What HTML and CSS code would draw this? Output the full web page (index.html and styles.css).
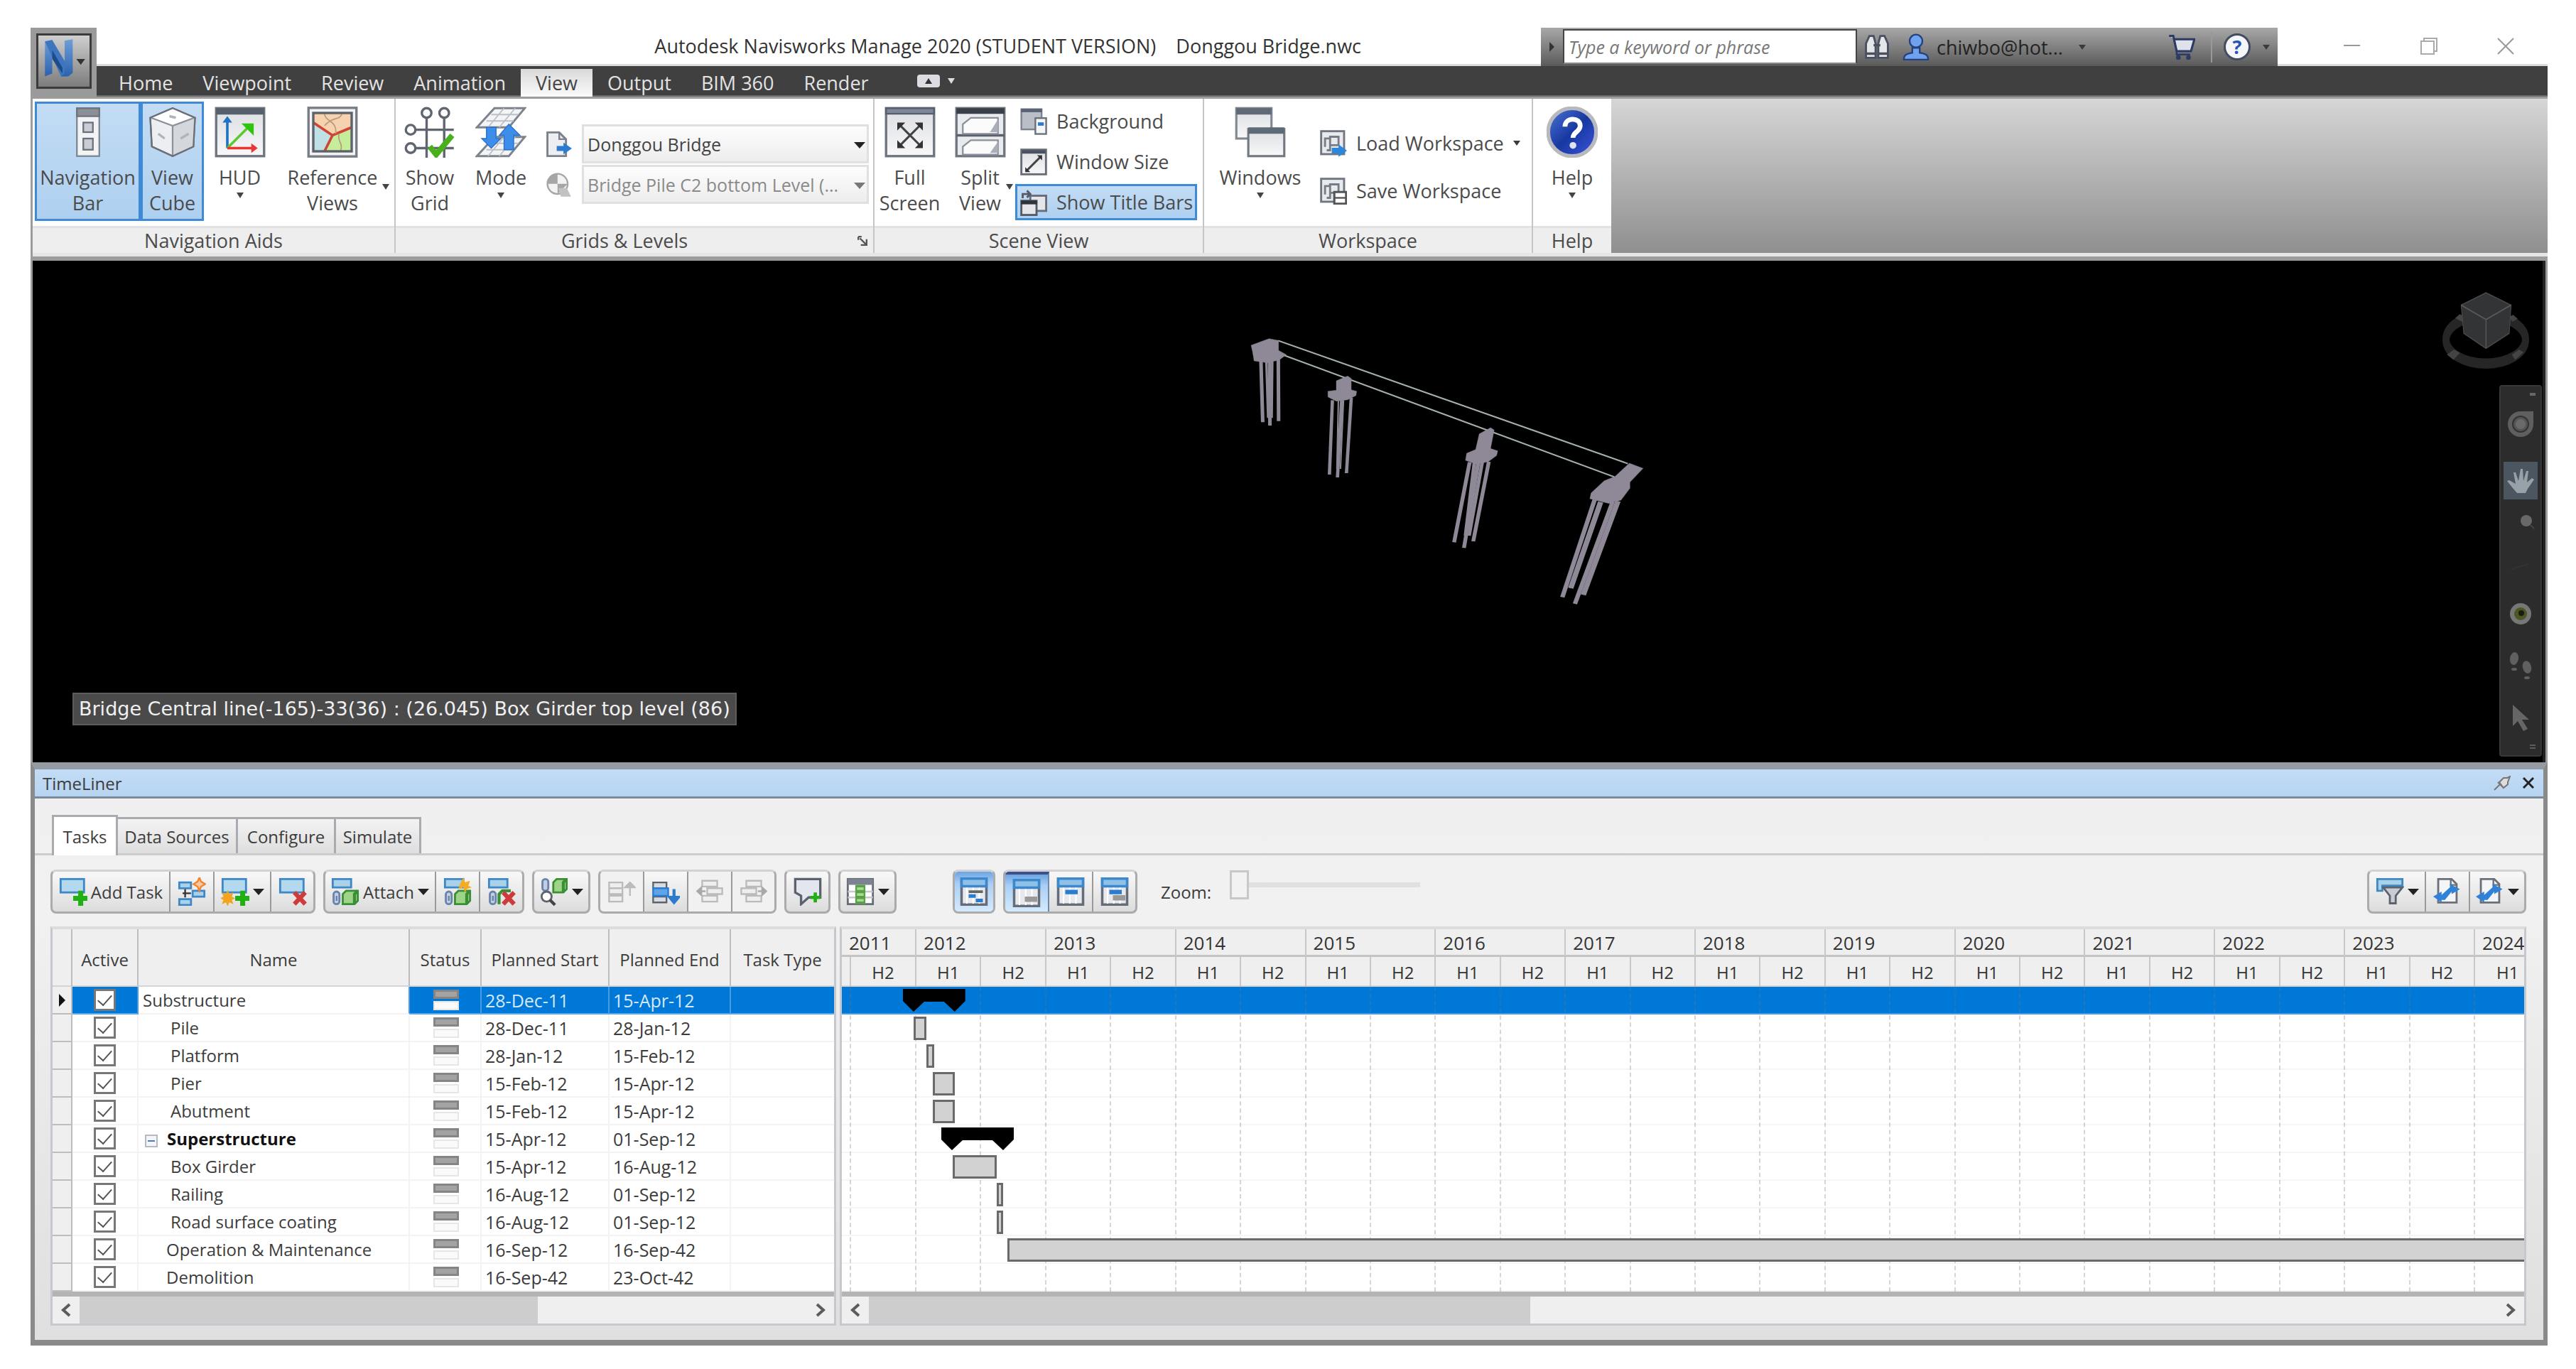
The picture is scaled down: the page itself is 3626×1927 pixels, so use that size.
FILE: index.html
```html
<!DOCTYPE html>
<html lang="en">
<head>
<meta charset="utf-8">
<title>Autodesk Navisworks Manage 2020</title>
<link rel="stylesheet" href="styles.css">
</head>
<body>
<svg class="defs" aria-hidden="true">
  <defs>
    <linearGradient id="g-metal" x1="0" y1="0" x2="0" y2="1"><stop offset="0" stop-color="#dcdee2"/><stop offset="1" stop-color="#f8f8f9"/></linearGradient>
    <linearGradient id="g-n" x1="0" y1="0" x2="0" y2="1"><stop offset="0" stop-color="#6f9fd8"/><stop offset="1" stop-color="#2a62ad"/></linearGradient>
    <linearGradient id="g-help" x1="0" y1="0" x2="1" y2="1"><stop offset="0" stop-color="#4f78d8"/><stop offset=".5" stop-color="#1738a0"/><stop offset="1" stop-color="#3f55e0"/></linearGradient>
    <g id="i-task"><rect x="1" y="1" width="14" height="8" fill="#b4d8ee" stroke="#3f88c5" stroke-width="1.200"/></g>
    <g id="i-plus"><path d="M11.500 8h3v3h3v3h-3v3h-3v-3h-3v-3h3z" fill="#1fb012"/></g>
    <g id="i-spark"><path d="M4 7.500l1 2.500 2.500-1-1 2.500 2 1-2 1 1 2.500-2.500-1L4 17.500 3 15l-2.500 1 1-2.500-2-1 2-1-1-2.500 2.500 1z" fill="#f2a51f"/></g>
    <g id="i-x"><path d="M9.500 9l6.500 7M16 9l-6.500 7" stroke="#cf3a3a" stroke-width="2.600" fill="none"/></g>
    <g id="i-clip"><rect x="1.500" y="8.500" width="3.500" height="7.500" rx="1.700" fill="#c3cfe0" stroke="#6983ac" stroke-width="1.200"/><path d="M3.300 11v3" stroke="#6983ac"/></g>
    <g id="i-cube"><path d="M7 10l2-2h7v6l-2 2H7z" fill="#9fd488" stroke="#3a8f35" stroke-width="1.200"/><path d="M14 16v-6l2-2" stroke="#3a8f35" stroke-width="1.800" fill="none"/></g>
    <g id="i-win"><rect x=".7" y=".7" width="14.600" height="14.600" fill="url(#g-metal)" stroke="#666d78" stroke-width="1.200"/><path d="M1 2h14" stroke="#4b525f" stroke-width="2"/></g>
    <g id="i-gantt"><rect x="1" y=".7" width="14" height="14.600" fill="#e8e9ec" stroke="#666d78" stroke-width="1.400"/><path d="M1 .7h14v4.300H1z" fill="#8fc0e6" stroke="#3b88cf" stroke-width="1.400"/><path d="M4 5.800v9M7.500 5.800v9M11 5.800v9" stroke="#fff" stroke-width=".8"/></g>
    <g id="i-sync"><path d="M3 1h8l3 3v11H3z" fill="#f4f5f7" stroke="#6a7079" stroke-width="1.200"/><path d="M10.500 1v3.500H14" fill="none" stroke="#6a7079"/><path d="M0 11.500l5-3v2l5-4.500V4l6 3-5 3V8.500l-4 5H5V15z" fill="#2f82d8"/></g>
    <symbol id="chev-l" viewBox="0 0 16 20"><path d="M13 2L4 10l9 8" fill="none" stroke="#5c5c5c" stroke-width="4"/></symbol>
    <symbol id="chev-r" viewBox="0 0 16 20"><path d="M3 2l9 8-9 8" fill="none" stroke="#5c5c5c" stroke-width="4"/></symbol>
  </defs>
</svg>

<div class="window">
  <header class="top">
    <button class="app-button" aria-label="Application menu">
      <svg viewBox="0 0 70 70" width="70" height="70"><path d="M9 8l10-2v46l-10 4z" fill="url(#g-n)"/><path d="M9 8l10-2 20 34v16H31z" fill="#3d76bd"/><path d="M36 7l11-2v46l-6 5H31l5-5z" fill="url(#g-n)"/><path d="M19 20l14 24v8L19 32z" fill="#1c4c8c"/><path d="M52 32h12l-6 8z" fill="#333"/></svg>
    </button>
    <div class="top-rows">
      <div class="titlebar">
        <h1 class="title"><span>Autodesk Navisworks Manage 2020 (STUDENT VERSION)</span><span>Donggou Bridge.nwc</span></h1>
        <div class="infocenter">
          <button class="info-toggle" aria-label="Toggle search"><i class="caret caret-right"></i></button>
          <input class="search" type="text" aria-label="Search" placeholder="Type a keyword or phrase">
          <div class="info-tools">
            <button aria-label="Search"><svg viewBox="0 0 16 16" width="38" height="38"><path d="M1.500 14.500V6l2-4.500h2.500l1.200 4.500v8.500zM8.800 14.500V6L10 1.500h2.500l2 4.500v8.500z" fill="#e4e6ea" stroke="#4a5060" stroke-width="1.200"/><path d="M6 7h4M2 12h5M9 12h5" stroke="#4a5060" stroke-width="1.400"/></svg></button>
            <button class="user"><svg viewBox="0 0 16 16" width="38" height="42"><circle cx="8" cy="4.500" r="3.800" fill="#6ea2ee" stroke="#24417e"/><path d="M.8 15.500c0-3 2-3.500 5-4v-3h4.400v3c3 .5 5 1 5 4z" fill="#6ea2ee" stroke="#24417e"/></svg><span>chiwbo@hot...</span><i class="caret small"></i></button>
            <button class="cart" aria-label="App store"><svg viewBox="0 0 16 16" width="38" height="38"><path d="M.5 1.500h2.500l2 9h8.500l2-7H4" fill="#dfe2ea" stroke="#2c3a66" stroke-width="1.300"/><path d="M5 10.500v2h8" stroke="#2c3a66" fill="none"/><circle cx="6" cy="14.300" r="1.400" fill="#2c3a66"/><circle cx="12" cy="14.300" r="1.400" fill="#2c3a66"/></svg></button>
            <button class="info-help" aria-label="Help"><span class="help-dot">?</span><i class="caret small"></i></button>
          </div>
        </div>
        <div class="window-controls">
          <button aria-label="Minimize"><svg viewBox="0 0 26 26" width="26" height="26"><path d="M1 12h23" stroke="#999" stroke-width="2"/></svg></button>
          <button aria-label="Restore"><svg viewBox="0 0 26 26" width="26" height="26"><path d="M2 6h18v18H2zM6 5V2h18v18h-3" fill="none" stroke="#aaa" stroke-width="2"/></svg></button>
          <button aria-label="Close"><svg viewBox="0 0 26 26" width="26" height="26"><path d="M2 2l22 22M24 2L2 24" stroke="#999" stroke-width="2"/></svg></button>
        </div>
      </div>
      <nav class="menu">
        <a href="#">Home</a><a href="#">Viewpoint</a><a href="#">Review</a><a href="#">Animation</a><a href="#" class="active">View</a><a href="#">Output</a><a href="#">BIM 360</a><a href="#">Render</a>
        <button class="ribbon-toggle" aria-label="Minimize ribbon"><span class="pill"><i class="caret caret-up"></i></span><i class="caret light"></i></button>
      </nav>
    </div>
  </header>

  <section class="ribbon" aria-label="View ribbon">
    <div class="panel p-nav">
      <div class="panel-body">
        <button class="big on"><svg viewBox="0 0 32 32"><rect x="9" y="1" width="14" height="30" fill="#f2f3f5" stroke="#7c8590"/><path d="M9 1h14v5H9z" fill="#8b8f98" stroke="#6e747e"/><rect x="13" y="10" width="6" height="6" fill="#c9ccd3" stroke="#6a7079"/><rect x="13" y="20" width="6" height="7" fill="#c9ccd3" stroke="#6a7079"/></svg><span>Navigation<br>Bar</span></button>
        <button class="big on"><svg viewBox="0 0 32 32"><path d="M16 1l14 6-1 18-13 6L3 25 2 7z" fill="#eceef1" stroke="#6a6f78"/><path d="M2 7l14 5 14-5L16 1z" fill="#fff"/><path d="M16 12v19l13-6 1-18z" fill="#d4d7dc"/><path d="M2.500 7L16 12l13.500-5M16 12v19" fill="none" stroke="#8c919a"/><path d="M16 1l14 6-1 18-13 6L3 25 2 7z" fill="none" stroke="#6a6f78"/><path d="M7 17l4 3M21 20l5-3M14 6l4 1" stroke="#b0b3ba" stroke-width="1.500"/></svg><span>View<br>Cube</span></button>
        <button class="big"><svg viewBox="0 0 32 32"><rect x="1" y="1" width="30" height="30" fill="url(#g-metal)" stroke="#6f7680" stroke-width="1.500"/><path d="M1 1h30v4H1z" fill="#55606e"/><path d="M8 26V9" stroke="#1f72c4" stroke-width="1.600"/><path d="M5 10l3-4 3 4z" fill="#1f72c4"/><path d="M8 26l13-13" stroke="#5cc82c" stroke-width="1.600"/><path d="M18 11h6v6z" fill="#2fc40d" stroke="#2fc40d"/><path d="M8 26h16" stroke="#e33" stroke-width="1.600"/><path d="M23 23l4 3-4 3z" fill="#e33"/></svg><span>HUD</span><i class="caret"></i></button>
        <button class="big"><svg viewBox="0 0 32 32"><rect x="1" y=".8" width="30" height="30.400" fill="#f2f2f4" stroke="#777d87" stroke-width="1.500"/><rect x="4" y="4" width="24" height="24" fill="#f6d2ae"/><path d="M4 10l12 8-4 10H4z" fill="#bfe0e4"/><path d="M16 18l12-4v14H11z" fill="#c6ee9a"/><path d="M4 10l12 8 12-5M16 18l-5 10" stroke="#cf4436" stroke-width="1.600" fill="none"/><path d="M11 4c0 6 8 4 7 13M22 4c-1 5-6 2-11 8M20 17c-1 5 3 6 1 11" stroke="#b99c80" fill="none" stroke-width=".8"/><rect x="4" y="4" width="24" height="24" fill="none" stroke="#5c626c" stroke-width="1.500"/></svg><span class="side"><span>Reference<br>Views</span><i class="caret"></i></span></button>
      </div>
      <h2>Navigation Aids</h2>
    </div>
    <div class="panel p-grids">
      <div class="panel-body">
        <button class="big"><svg viewBox="0 0 32 32"><g fill="none" stroke="#5f666f" stroke-width="1.500"><circle cx="14" cy="4" r="3"/><circle cx="25" cy="4" r="3"/><circle cx="4" cy="14.500" r="3"/><circle cx="4" cy="26" r="3"/><path d="M14 7v25M25 7v25M7 14.500h24M7 26h24"/></g><path d="M16 25l4 5 10-12" fill="none" stroke="#47b01a" stroke-width="3.500"/></svg><span>Show<br>Grid</span></button>
        <button class="big"><svg viewBox="0 0 32 32"><g fill="#f3f4f5" stroke="#7d838c" stroke-width="1.300"><path d="M1 13L12 1h19L21 13zM1 31l11-12h19L21 31z"/></g><path d="M7 9h17M10 5h17M7 27h17M10 23h17M8 13l10-12M15 13L25 1M8 31l10-12M15 31l10-12" stroke="#bcc0c6" stroke-width=".8"/><path d="M7 13h6v7h3l-6 6-6-6h3zM18 27h6V18h4l-7-7-6 7h3z" fill="#3c8eea" stroke="#2a70c8" stroke-width=".6"/></svg><span>Mode</span><i class="caret"></i></button>
        <div class="combos">
          <svg viewBox="0 0 16 16"><path d="M1.500 1h7l4 4v10h-11z" fill="#eceef1" stroke="#7b818a" stroke-width="1.200"/><path d="M8.500 1v4h4" fill="none" stroke="#7b818a"/><path d="M7 9h4V7l5 3.500-5 3.500v-2H7z" fill="#2b7bd0"/></svg>
          <label class="combo"><select aria-label="Active grid"><option>Donggou Bridge</option></select><i class="caret large"></i></label>
          <svg viewBox="0 0 16 16"><circle cx="7.500" cy="7.500" r="6" fill="#f3f3f3" stroke="#a6a6a6"/><path d="M7.500 1.500v6h-6a6 6 0 0 1 6-6zM7.500 13.500v-6h6z" fill="#a6a6a6"/><path d="M8 10h5l2.500 5h-6z" fill="#c2c2c2"/></svg>
          <label class="combo off"><select aria-label="Active level" disabled><option>Bridge Pile C2 bottom Level (...</option></select><i class="caret large"></i></label>
        </div>
      </div>
      <h2>Grids &amp; Levels<svg class="launcher" viewBox="0 0 12 12" width="14" height="14"><path d="M1 1h4M1 1v4M3 3l7 7M11 4v7H4" fill="none" stroke="#555" stroke-width="2"/></svg></h2>
    </div>
    <div class="panel p-scene">
      <div class="panel-body">
        <button class="big"><svg viewBox="0 0 32 32"><rect x="1" y="1" width="30" height="30" fill="url(#g-metal)" stroke="#6f7680" stroke-width="1.500"/><path d="M1 1h30v3.500H1z" fill="#7c8799" stroke="#555f6c"/><path d="M9 11l14 14M23 11L9 25" stroke="#444" stroke-width="1.400"/><path d="M8 10h5l-5 5zM24 10h-5l5 5zM8 26h5l-5-5zM24 26h-5l5-5z" fill="#333"/></svg><span>Full<br>Screen</span></button>
        <button class="big"><svg viewBox="0 0 32 32"><rect x="1" y="1" width="30" height="30" fill="#e8eaed" stroke="#6f7680" stroke-width="1.500"/><path d="M1 1h30v3.500H1z" fill="#3a3f47"/><path d="M1 18h30" stroke="#5b616b" stroke-width="1.500"/><path d="M5 17v-6l5-4h17v10zM5 30v-5l5-4h17v9z" fill="#fbfbfc" stroke="#8a9099"/><path d="M22 16l5-8v8zM22 29l5-7v7z" fill="#a9afb9"/></svg><span class="side"><span>Split<br>View</span><i class="caret"></i></span></button>
        <div class="stack">
          <button class="row"><svg viewBox="0 0 16 16"><rect x=".7" y=".7" width="12" height="12" fill="#b9bec7" stroke="#7b838f"/><path d="M.5 1.500h12.500" stroke="#596373" stroke-width="2"/><rect x="9" y="6" width="6.400" height="9.400" fill="#f5f6f8" stroke="#6a7079"/><path d="M10.500 9.500h3.500" stroke="#2b7bd0" stroke-width="2"/></svg>Background</button>
          <button class="row"><svg viewBox="0 0 16 16"><use href="#i-win"/><path d="M4 13l8-8" stroke="#444" stroke-width="1.200"/><path d="M3 11v3h3zM13 4v3l-3-3z" fill="#333"/></svg>Window Size</button>
          <button class="row on"><svg viewBox="0 0 16 16"><rect x="6" y="4" width="9.400" height="9" fill="#e4e6ea" stroke="#666d78" stroke-width="1.200"/><rect x=".7" y="7" width="9" height="8.400" fill="#e4e6ea" stroke="#555b66" stroke-width="1.200"/><path d="M.5 8h9.500" stroke="#2e333b" stroke-width="2.200"/><path d="M1.500 5.500V3h4M4 1l2 2-2 2" fill="none" stroke="#555b66" stroke-width="1.200"/></svg>Show Title Bars</button>
        </div>
      </div>
      <h2>Scene View</h2>
    </div>
    <div class="panel p-work">
      <div class="panel-body">
        <button class="big"><svg viewBox="0 0 32 32"><rect x="1" y="1" width="22" height="19" fill="url(#g-metal)" stroke="#828891" stroke-width="1.400"/><path d="M1 1h22v4H1z" fill="#5f6a78"/><rect x="8.500" y="14" width="22.500" height="17" fill="url(#g-metal)" stroke="#737982" stroke-width="1.400"/><path d="M8.500 13h22.500v4H8.500z" fill="#5f6a78"/></svg><span>Windows</span><i class="caret"></i></button>
        <div class="stack wide">
          <button class="row"><svg viewBox="0 0 16 16"><rect x=".7" y=".7" width="13.600" height="13.600" fill="#e8eaee" stroke="#6f7680" stroke-width="1.200"/><path d="M3 10V5h3v7H4M6 4h5v5H6z" fill="none" stroke="#777d87" stroke-width="1.200"/><path d="M7 10.500h4V8.500l5 3.700-5 3.700v-2H7z" fill="#2b86dc"/></svg>Load Workspace<i class="caret small"></i></button>
          <button class="row"><svg viewBox="0 0 16 16"><rect x=".7" y=".7" width="13.600" height="13.600" fill="#e8eaee" stroke="#6f7680" stroke-width="1.200"/><path d="M3 10V5h3v7H4M6 4h5v5H6z" fill="none" stroke="#777d87" stroke-width="1.200"/><path d="M8.500 8.500h7v7h-7z" fill="#fff" stroke="#555" stroke-width="1.300"/><path d="M8.500 12h7" stroke="#555"/></svg>Save Workspace</button>
        </div>
      </div>
      <h2>Workspace</h2>
    </div>
    <div class="panel p-help">
      <div class="panel-body">
        <button class="big"><svg viewBox="0 0 32 32"><circle cx="16" cy="16" r="15" fill="url(#g-help)" stroke="#b7b9be" stroke-width="2.400"/><path d="M11.500 12.500c0-6 9.500-6 9.500-.5 0 3.800-4.500 3.800-4.500 7.500" fill="none" stroke="#fff" stroke-width="3"/><circle cx="16.500" cy="24.300" r="2.100" fill="#dfe4f4"/></svg><span>Help</span><i class="caret"></i></button>
      </div>
      <h2>Help</h2>
    </div>
    <div class="ribbon-rest"></div>
  </section>

  <main class="viewport">
    <svg class="scene" viewBox="46 367 3537 706" preserveAspectRatio="none" aria-label="Bridge model">
      <g transform="translate(1700 440) scale(.4209 .3333)" fill="#8f8896" stroke="#8f8896">
        <path d="M235 118L1405 638M190 150L1360 694" stroke="#a4b0a8" stroke-width="6" fill="none"/>
        <path d="M145 138l60-28 32 8v42l26 18-24 22-40 12-44-8-5-38z"/>
        <path d="M178 205l6 258M207 205l1 272M236 195l1 263" stroke-width="12" fill="none"/><path d="M196 205l6 240M216 205l-2 240" stroke-width="8" fill="none"/>
        <path d="M430 288l38-20 12 10v48l18 6-2 18-28 18-38 6-28-18v-24l28-4z"/>
        <path d="M417 370l-10 314M448 370l-14 326M480 360l-16 318" stroke-width="11" fill="none"/><path d="M437 370l-5 290M454 370l-10 290" stroke-width="5" fill="none"/>
        <path d="M908 512l38-26 12 10-12 78 24 10-4 20-28 26-40 10-36-16 4-30 30-16z"/>
        <path d="M876 632l-52 338M905 632l-48 362M940 630l-52 336" stroke-width="13" fill="none"/><path d="M892 632l-30 310M918 632l-44 310" stroke-width="12" fill="none"/>
        <path d="M1410 636l46 22-44 58v26l-30 50-40 14-64-20 4-24 44-52 36-18z"/>
        <path d="M1294 790l-108 412M1354 800l-126 430" stroke-width="15" fill="none"/><path d="M1314 800l-100 364M1372 796l-116 396" stroke-width="18" fill="none"/>
      </g>
      <g transform="translate(3380 380) scale(.3333 .4847)">
        <ellipse cx="357" cy="202" rx="168" ry="70" fill="none" stroke="#262626" stroke-width="30"/>
        <path d="M193 246l30-15 24 10-26 20zM467 246l30-15 20 8-36 22zM228 140l20-12 18 10-10 12zM456 138l16-8 20 12-22 8z" fill="#444"/>
        <path d="M253 102l105-36 106 36-8 82-98 44-94-44z" fill="#333436" stroke="#4c4c4c" stroke-width="3"/>
        <path d="M253 102l105 42 106-42M358 144v82" fill="none" stroke="#5b5b5b" stroke-width="4"/>
      </g>
    </svg>
    <p class="readout">Bridge Central line(-165)-33(36) : (26.045) Box Girder top level (86)</p>
    <nav class="navbar" aria-label="Navigation bar">
      <button class="n-close" aria-label="Close"><svg viewBox="0 0 8 8" width="8" height="8"><path d="M0 2h8v4H0z" fill="#666"/></svg></button>
      <button class="n-wheel" aria-label="Steering wheel"><svg viewBox="0 0 38 38" width="38" height="38"><path d="M19 1h18v18a18 18 0 1 1-18-18z" fill="#5f5f5f"/><circle cx="19" cy="19" r="11" fill="#555" stroke="#333" stroke-width="2"/><circle cx="19" cy="19" r="7" fill="#6a6a6a"/></svg></button>
      <button class="n-pan" aria-label="Pan"><svg viewBox="0 0 38 38" width="38" height="38"><path d="M0 19l3-1 9 5-3-16h3l4 12 3-17h3l1 17 4-14h3l-2 16 7-6 3 2-9 13-3 6H14l-6-7z" fill="#98a0a8"/></svg></button>
      <button class="n-zoom" aria-label="Zoom window"><svg viewBox="0 0 38 38" width="38" height="38"><circle cx="27" cy="19" r="8" fill="#686868"/><path d="M33 25l6 6" stroke="#444" stroke-width="2"/></svg></button>
      <button class="n-orbit" aria-label="Orbit"><svg viewBox="0 0 38 38" width="38" height="38"><path d="M6 22c8-6 16-4 24-8" fill="none" stroke="#363330" stroke-width="2"/></svg></button>
      <button class="n-look" aria-label="Look"><svg viewBox="0 0 38 38" width="38" height="38"><circle cx="19" cy="19" r="15" fill="#777"/><circle cx="19" cy="19" r="9" fill="#4b5724"/><circle cx="20" cy="18" r="4" fill="#181c0c"/></svg></button>
      <button class="n-walk" aria-label="Walk"><svg viewBox="0 0 38 38" width="38" height="44"><ellipse cx="10" cy="9" rx="6" ry="9" fill="#606060" transform="rotate(10 10 9)"/><ellipse cx="10" cy="24" rx="4" ry="2" fill="#606060"/><ellipse cx="28" cy="21" rx="6" ry="9" fill="#606060" transform="rotate(-14 28 21)"/><ellipse cx="28" cy="36" rx="4" ry="2" fill="#606060"/></svg></button>
      <button class="n-select" aria-label="Select"><svg viewBox="0 0 38 38" width="38" height="38"><path d="M8 0v30l7-7 8 14 6-3-8-13h10z" fill="#666"/></svg></button>
      <button class="n-menu" aria-label="Customize"><svg viewBox="0 0 8 8" width="8" height="8"><path d="M0 1h8M0 5h8" stroke="#5c5c5c" stroke-width="2"/></svg></button>
    </nav>
  </main>

  <section class="timeliner" aria-label="TimeLiner">
    <header class="tl-title">
      <h2>TimeLiner</h2>
      <button aria-label="Auto hide"><svg viewBox="0 0 24 24" width="24" height="24"><path d="M1 22l8-8M6 11l8 8M8 11l6-6h5l4-2-3 8v3l-6 5z" fill="#ddd" stroke="#777" stroke-width="2"/></svg></button>
      <button aria-label="Close"><svg viewBox="0 0 16 16" width="16" height="16"><path d="M1 1l14 14M15 1L1 15" stroke="#222" stroke-width="3"/></svg></button>
    </header>
    <div class="tabs" role="tablist">
      <button class="tab active" role="tab">Tasks</button><button class="tab" role="tab">Data Sources</button><button class="tab" role="tab">Configure</button><button class="tab" role="tab">Simulate</button>
    </div>
    <div class="tl-body">
      <div class="toolbar">
        <div class="group">
          <button class="w-add"><svg viewBox="0 0 17 17"><use href="#i-task"/><use href="#i-plus"/></svg>Add Task</button>
          <button class="w1" aria-label="Insert task"><svg viewBox="0 0 17 17"><g fill="#a9d2ea" stroke="#3f88c5" stroke-width="1.200"><path d="M1 3h7v3.500H1zM9 8h7v3.500H9zM1 13h7v3.500H1z"/></g><path d="M4.500 7v5M3 9.500h5" stroke="#333"/><path d="M13 0l1 2.500 2.500 1.500L14 5.500 13 8l-1-2.500L9.500 4 12 2.500z" fill="#f9c7a4" stroke="#f2852b"/></svg></button>
          <button class="w2" aria-label="Auto-add tasks"><svg viewBox="0 0 17 17"><use href="#i-task"/><use href="#i-spark"/><use href="#i-plus"/></svg><i class="caret large"></i></button>
          <button class="w1" aria-label="Delete task"><svg viewBox="0 0 17 17"><use href="#i-task"/><use href="#i-x"/></svg></button>
        </div>
        <div class="group">
          <button class="w-att"><svg viewBox="0 0 17 17"><path d="M1 1h11v5H1z" fill="#a9d2ea" stroke="#3f88c5" stroke-width="1.200"/><use href="#i-clip"/><use href="#i-cube"/></svg>Attach<i class="caret large"></i></button>
          <button class="w1" aria-label="Auto-attach using rules"><svg viewBox="0 0 17 17"><path d="M1 1h11v5H1z" fill="#a9d2ea" stroke="#3f88c5" stroke-width="1.200"/><use href="#i-clip"/><use href="#i-cube"/><path d="M12 0l1 3 3-1-1 3 2 1-3 1-1 2-1-3-3 1 1-3z" fill="#f4ad22"/></svg></button>
          <button class="w1" aria-label="Clear attachment"><svg viewBox="0 0 17 17"><path d="M1 1h11v5H1z" fill="#a9d2ea" stroke="#3f88c5" stroke-width="1.200"/><use href="#i-clip"/><path d="M7 16v-6l2-2h5" fill="none" stroke="#3a8f35" stroke-width="1.800"/><use href="#i-x"/></svg></button>
        </div>
        <div class="group">
          <button class="w2" aria-label="Find items"><svg viewBox="0 0 17 17"><rect x="1.500" y="1" width="3.500" height="7" rx="1.700" fill="#c3cfe0" stroke="#6983ac" stroke-width="1.200"/><path d="M8 3l2-2h6v6l-2 2H8z" fill="#9fd488" stroke="#3a8f35" stroke-width="1.200"/><path d="M14 9V3l2-2" stroke="#3a8f35" stroke-width="1.800" fill="none"/><circle cx="4" cy="11.500" r="3" fill="#fff" stroke="#5c636e" stroke-width="1.200"/><path d="M6 13.500l3 3" stroke="#444" stroke-width="1.800"/></svg><i class="caret large"></i></button>
        </div>
        <div class="group">
          <button class="w1 off" disabled aria-label="Move up"><svg viewBox="0 0 17 17"><path d="M1 3h8v3.500H1zM1 6.500h8V10H1zM1 11h8v3.500H1z" fill="#eee" stroke="#bbb"/><path d="M13.500 11V5M10.500 6h6l-3-3z" fill="#bbb" stroke="#bbb"/></svg></button>
          <button class="w1" aria-label="Move down"><svg viewBox="0 0 17 17"><path d="M1 3h8v3.500H1zM1 11.500h8V15H1z" fill="#d8dbe0" stroke="#5c636e"/><path d="M1 6.500h9v4.500H1z" fill="#5da5e8" stroke="#2b7bd0"/><path d="M13.500 7v7M11 12h5l-2.500 3z" fill="#2b7bd0" stroke="#2b7bd0" stroke-width="1.800"/></svg></button>
          <button class="w1 off" disabled aria-label="Outdent"><svg viewBox="0 0 17 17"><path d="M4 2h9v3.500H4zM7 6.500h9V10H7zM4 11h9v3.500H4z" fill="#eee" stroke="#bbb"/><path d="M6 8.300H1.500M3.500 6L1 8.300l2.500 2.300z" fill="#999" stroke="#aaa"/></svg></button>
          <button class="w1 off" disabled aria-label="Indent"><svg viewBox="0 0 17 17"><path d="M4 2h9v3.500H4zM1 6.500h9V10H1zM4 11h9v3.500H4z" fill="#eee" stroke="#bbb"/><path d="M11 8.300h4.500M13.500 6L16 8.300l-2.500 2.300z" fill="#999" stroke="#aaa"/></svg></button>
        </div>
        <div class="group">
          <button class="w1" aria-label="Add comment"><svg viewBox="0 0 17 17"><path d="M1 1h15v11H9l-4.500 4v-5L1 9z" fill="#e3e6ee" stroke="#5c636e" stroke-width="1.400"/><path d="M12 9h2v2h2v2h-2v2h-2v-2h-2v-2h2z" fill="#1fb012"/></svg></button>
        </div>
        <div class="group">
          <button class="w2" aria-label="Columns"><svg viewBox="0 0 17 17"><rect x="1" y="1" width="15" height="15" fill="#fff" stroke="#666d78" stroke-width="1.200"/><path d="M1 1h15v3.500H1z" fill="#7d8390"/><path d="M1 8.500h15M1 12h15" stroke="#c6c8cc"/><path d="M5.500 4.500h6V16h-6z" fill="#5a9f49"/><path d="M6.500 6h4v1.500h-4zM6.500 9.500h4V11h-4zM6.500 13h4v1.500h-4z" fill="#a6dc8c"/></svg><i class="caret large"></i></button>
        </div>
        <div class="group views">
          <button class="w1 on" aria-label="Show gantt chart"><svg viewBox="0 0 16 16"><use href="#i-gantt"/><path d="M5 8h8" stroke="#666" stroke-width="1.500"/><path d="M5 9.500h4v2H5zM9 12h4v2H9z" fill="#2b7bd0"/></svg></button>
        </div>
        <div class="group">
          <button class="w1 on deep" aria-label="Display planned dates"><svg viewBox="0 0 16 16"><use href="#i-gantt"/><path d="M7 10h7v3H7z" fill="#9a9a9a"/></svg></button>
          <button class="w1" aria-label="Display actual dates"><svg viewBox="0 0 16 16"><use href="#i-gantt"/><path d="M5 7h7v2.500H5z" fill="#2b7bd0"/></svg></button>
          <button class="w1" aria-label="Display planned against actual"><svg viewBox="0 0 16 16"><use href="#i-gantt"/><path d="M7 10h7v3H7z" fill="#9a9a9a"/><path d="M5 7h7v2.500H5z" fill="#2b7bd0"/></svg></button>
        </div>
        <label class="zoom">Zoom:<input type="range" min="0" max="100" value="0"></label>
        <div class="group last">
          <button class="w2" aria-label="Filter by status"><svg viewBox="0 0 17 17"><path d="M1 8V1h15v4H4v3z" fill="#a9d2ea" stroke="#3f88c5" stroke-width="1.200"/><path d="M4.500 6h11.500L12 11v4.500H8.500V11z" fill="#c9ccd3" stroke="#5c636e" stroke-width="1.200"/></svg><i class="caret large"></i></button>
          <button class="w1" aria-label="Export to sets"><svg viewBox="0 0 17 17"><use href="#i-sync"/></svg></button>
          <button class="w2" aria-label="Export schedule"><svg viewBox="0 0 17 17"><use href="#i-sync"/></svg><i class="caret large"></i></button>
        </div>
      </div>

      <div class="sheet">
        <div class="pane">
          <table class="tasks">
            <colgroup><col class="c0"><col class="c1"><col><col class="c3"><col class="c4"><col class="c5"><col class="c6"></colgroup>
            <thead><tr><th></th><th>Active</th><th>Name</th><th>Status</th><th>Planned Start</th><th>Planned End</th><th>Task Type</th></tr></thead>
            <tbody>
              <tr class="selected"><td><i class="caret caret-right"></i></td><td><input type="checkbox" checked aria-label="Substructure active"></td><td class="name">Substructure</td><td><i class="status"></i></td><td>28-Dec-11</td><td>15-Apr-12</td><td></td></tr>
              <tr><td></td><td><input type="checkbox" checked aria-label="Pile active"></td><td class="name l2">Pile</td><td><i class="status"></i></td><td>28-Dec-11</td><td>28-Jan-12</td><td></td></tr>
              <tr><td></td><td><input type="checkbox" checked aria-label="Platform active"></td><td class="name l2">Platform</td><td><i class="status"></i></td><td>28-Jan-12</td><td>15-Feb-12</td><td></td></tr>
              <tr><td></td><td><input type="checkbox" checked aria-label="Pier active"></td><td class="name l2">Pier</td><td><i class="status"></i></td><td>15-Feb-12</td><td>15-Apr-12</td><td></td></tr>
              <tr><td></td><td><input type="checkbox" checked aria-label="Abutment active"></td><td class="name l2">Abutment</td><td><i class="status"></i></td><td>15-Feb-12</td><td>15-Apr-12</td><td></td></tr>
              <tr><td></td><td><input type="checkbox" checked aria-label="Superstructure active"></td><td class="name parent"><button class="expander" aria-label="Collapse"></button>Superstructure</td><td><i class="status"></i></td><td>15-Apr-12</td><td>01-Sep-12</td><td></td></tr>
              <tr><td></td><td><input type="checkbox" checked aria-label="Box Girder active"></td><td class="name l2">Box Girder</td><td><i class="status"></i></td><td>15-Apr-12</td><td>16-Aug-12</td><td></td></tr>
              <tr><td></td><td><input type="checkbox" checked aria-label="Railing active"></td><td class="name l2">Railing</td><td><i class="status"></i></td><td>16-Aug-12</td><td>01-Sep-12</td><td></td></tr>
              <tr><td></td><td><input type="checkbox" checked aria-label="Road surface coating active"></td><td class="name l2">Road surface coating</td><td><i class="status"></i></td><td>16-Aug-12</td><td>01-Sep-12</td><td></td></tr>
              <tr><td></td><td><input type="checkbox" checked aria-label="Operation and Maintenance active"></td><td class="name l1">Operation &amp; Maintenance</td><td><i class="status"></i></td><td>16-Sep-12</td><td>16-Sep-42</td><td></td></tr>
              <tr><td></td><td><input type="checkbox" checked aria-label="Demolition active"></td><td class="name l1">Demolition</td><td><i class="status"></i></td><td>16-Sep-42</td><td>23-Oct-42</td><td></td></tr>
            </tbody>
          </table>
          <div class="scroll"><button aria-label="Scroll left"><svg width="16" height="20"><use href="#chev-l"/></svg></button><div class="track"><div class="thumb" style="width:63%"></div></div><button aria-label="Scroll right"><svg width="16" height="20"><use href="#chev-r"/></svg></button></div>
        </div>
        <div class="pane gantt">
          <div class="years"><span>2011</span><span>2012</span><span>2013</span><span>2014</span><span>2015</span><span>2016</span><span>2017</span><span>2018</span><span>2019</span><span>2020</span><span>2021</span><span>2022</span><span>2023</span><span>2024</span></div>
          <div class="halves"><span></span><span>H2</span><span>H1</span><span>H2</span><span>H1</span><span>H2</span><span>H1</span><span>H2</span><span>H1</span><span>H2</span><span>H1</span><span>H2</span><span>H1</span><span>H2</span><span>H1</span><span>H2</span><span>H1</span><span>H2</span><span>H1</span><span>H2</span><span>H1</span><span>H2</span><span>H1</span><span>H2</span><span>H1</span><span>H2</span><span>H1</span></div>
          <div class="lanes">
            <div class="lane selected"><b class="summary" style="left:3.63%;width:3.71%"></b></div>
            <div class="lane"><b class="bar" style="left:4.26%;width:.76%"></b></div>
            <div class="lane"><b class="bar" style="left:5.02%;width:.46%"></b></div>
            <div class="lane"><b class="bar" style="left:5.4%;width:1.31%"></b></div>
            <div class="lane"><b class="bar" style="left:5.4%;width:1.31%"></b></div>
            <div class="lane"><b class="summary" style="left:5.91%;width:4.31%"></b></div>
            <div class="lane"><b class="bar" style="left:6.59%;width:2.62%"></b></div>
            <div class="lane"><b class="bar" style="left:9.2%;width:.38%"></b></div>
            <div class="lane"><b class="bar" style="left:9.2%;width:.38%"></b></div>
            <div class="lane"><b class="bar" style="left:9.84%;width:100%"></b></div>
            <div class="lane"></div>
            <div class="gridlines"><i></i><i></i><i></i><i></i><i></i><i></i><i></i><i></i><i></i><i></i><i></i><i></i><i></i><i></i><i></i><i></i><i></i><i></i><i></i><i></i><i></i><i></i><i></i><i></i><i></i><i></i><i></i></div>
          </div>
          <div class="scroll"><button aria-label="Scroll left"><svg width="16" height="20"><use href="#chev-l"/></svg></button><div class="track"><div class="thumb" style="width:40.6%"></div></div><button aria-label="Scroll right"><svg width="16" height="20"><use href="#chev-r"/></svg></button></div>
        </div>
      </div>
    </div>
  </section>
</div>
</body>
</html>
```
FILE: styles.css
```css
* { box-sizing: border-box; }
body {
  margin: 0;
  padding: 39px 40px 33px 43px;
  background: #fff;
  color: #444;
  font-family: "Open Sans", "Noto Sans", sans-serif;
  font-size: 27px;
}
.defs { position: absolute; width: 0; height: 0; }
h1, h2, p { margin: 0; font-size: inherit; font-weight: 400; }
button, input, select { font: inherit; color: inherit; }
button { margin: 0; padding: 0; border: 0; background: none; white-space: nowrap; }
a { color: inherit; text-decoration: none; }
svg { display: block; flex: none; }

.caret { display: block; flex: none; width: 0; height: 0; border: solid transparent; border-width: 8px 5px 0; border-top-color: #444; }
.caret.small { border-width: 7px 5px 0; border-top-color: #3a3a3a; }
.caret.large { border-width: 9px 8px 0; border-top-color: #222; }
.caret.light { border-top-color: #ddd; }
.caret-right { border-width: 9px 0 9px 9px; border-color: transparent; border-left-color: #111; }
.caret-up { border-width: 0 5px 8px; border-color: transparent; border-bottom-color: #333; }

.window { display: flex; flex-direction: column; min-height: calc(100vh - 72px); }

/* Title bar and menu */
.top { display: flex; background: #9a9a9a; }
.app-button { width: 93px; height: 93px; background: #9a9a9a; display: grid; place-items: center; }
.app-button svg { width: 78px; height: 78px; border: 3px solid #3b3b3b; background: linear-gradient(#cfcfcf, #7c7c7c); }
.top-rows { flex: 1; min-width: 0; }
.titlebar { display: flex; height: 54px; background: #fff; border-bottom: 3px solid #dcdcdc; }
.title { flex: 1; display: flex; justify-content: flex-end; gap: 28px; align-items: center; padding-right: 253px; color: #333; white-space: nowrap; }
.infocenter { display: flex; width: 1037px; height: 54px; background: linear-gradient(#a8a8a8, #5a5a5a); }
.info-toggle { width: 31px; display: grid; place-items: center; }
.info-toggle .caret-right { border-left-color: #333; border-width: 7px 0 7px 7px; }
.search { width: 414px; height: 49px; margin-top: 2px; border: 2px solid #444; border-bottom-color: #888; padding: 0 6px; background: #fff; font-size: 25px; font-style: italic; }
.search::placeholder { color: #777; opacity: 1; }
.info-tools { flex: 1; display: flex; align-items: center; padding: 0 11px 0 9px; color: #222; }
.user { display: flex; align-items: center; gap: 10px; margin-left: 17px; }
.user .caret { margin-left: 12px; }
.cart { margin-left: auto; }
.info-help { display: flex; align-items: center; gap: 17px; margin-left: 22px; padding-left: 16px; height: 44px; border-left: 2px solid #999; }
.help-dot { display: grid; place-items: center; width: 38px; height: 38px; border: 3px solid #444d60; border-radius: 50%; background: #f5f6fa; color: #2454b8; font-weight: 700; line-height: 30px; }
.window-controls { display: flex; align-items: center; gap: 82px; width: 380px; padding-left: 92px; }
.menu { display: flex; height: 43px; background: #404040; color: #e3e3e3; padding-left: 10px; border-bottom: 2px solid #6a6a6a; }
.menu a { padding: 0 21px; line-height: 48px; }
.menu .active { margin-top: 4px; height: 39px; line-height: 40px; background: linear-gradient(#d9d9d9, #fbfbfb); color: #444; }
.ribbon-toggle { display: flex; align-items: center; gap: 11px; margin-left: 47px; }
.pill { display: grid; place-items: center; width: 32px; height: 18px; border-radius: 4px; background: #dcdde2; }

/* Ribbon */
.ribbon { display: flex; border: solid #9c9c9c; border-width: 3px 0 0 3px; background: #e6e6e6; padding-bottom: 5px; color: #4b4b4b; }
.panel { display: flex; flex-direction: column; flex: none; background: #fff; border-right: 2px solid #c6c6c6; }
.p-nav { width: 511px; }
.p-grids { width: 674px; }
.p-scene { width: 464px; }
.p-work { width: 463px; }
.p-help { width: 110px; border-right: 0; }
.panel h2 { position: relative; height: 38px; border-top: 3px solid #e2e2e2; background: #eee; line-height: 36px; text-align: center; }
.p-grids h2 { padding-right: 28px; }
.launcher { position: absolute; right: 8px; top: 11px; }
.panel-body { display: flex; height: 179px; padding-top: 4px; align-items: flex-start; }
.p-nav .panel-body { padding-left: 3px; }
.big { display: flex; flex-direction: column; align-items: center; height: 168px; padding: 4px 0 0; line-height: 36px; border: 3px solid transparent; }
.big > svg { width: 72px; height: 72px; margin-bottom: 10px; }
.big > .caret { margin-top: 3px; }
.side { display: flex; align-items: center; gap: 7px; padding-left: 17px; }
.side .caret { margin-top: -10px; }
.on { border: 3px solid #3d8ad8; background: linear-gradient(#c3dcf4, #aed0f0); }
.p-nav .big:nth-child(1) { width: 149px; }
.p-nav .big:nth-child(2) { width: 89px; }
.p-nav .big:nth-child(3) { width: 101px; }
.p-nav .big:nth-child(4) { width: 160px; }
.p-grids .big:nth-child(1) { width: 96px; }
.p-grids .big:nth-child(2) { width: 104px; }
.p-scene .big:nth-child(-n+2) { width: 99px; }
.p-work .big { width: 158px; }
.p-help .big { width: 110px; }
.combos { flex: 1; display: grid; grid-template-columns: 38px 1fr; gap: 2px 14px; padding: 32px 6px 0 10px; align-items: center; }
.combos svg { width: 38px; height: 38px; }
.combo { position: relative; display: block; }
.combo select { appearance: none; display: block; width: 100%; height: 55px; padding: 0 5px; border: 3px solid #e0e0e0; border-radius: 0; background: linear-gradient(#fdfdfd, #ededed); color: #444; font-size: 25px; opacity: 1; }
.combo .caret { position: absolute; right: 5px; top: 25px; }
.combo.off select { color: #8a8a8a; }
.combo.off .caret { border-top-color: #777; }
.stack { display: flex; flex-direction: column; gap: 6px; padding-top: 2px; }
.stack.wide { gap: 16px; padding-top: 33px; }
.row { display: flex; align-items: center; gap: 13px; width: 256px; height: 51px; padding: 0 0 0 5px; border: 2px solid transparent; }
.row svg { width: 38px; height: 38px; }
.row.on { border: 3px solid #3d8ad8; padding-left: 4px; }
.stack.wide .row { width: 296px; padding-left: 3px; }
.ribbon-rest { flex: 1; background: linear-gradient(#d6d6d6, #8f8f8f); }

/* 3D view */
.viewport { position: relative; flex: 1 0 700px; background: #000; border: solid #9c9c9c; border-width: 6px 3px 0 3px; box-shadow: inset -4px 0 #222; }
.scene { position: absolute; inset: 0; width: 100%; height: 100%; }
.readout { position: absolute; left: 56px; bottom: 52px; height: 46px; padding: 0 7px; background: #4a4a4a; border: 2px solid #5c5c5c; color: #f0f0f0; font-family: "DejaVu Sans", sans-serif; font-size: 27px; line-height: 42px; white-space: nowrap; }
.navbar { position: absolute; right: 5px; bottom: 8px; display: flex; flex-direction: column; width: 60px; padding: 0 4px; border: 2px solid #383838; border-radius: 4px; background: #2c2c2c; }
.navbar button { display: grid; place-items: center; }
.n-close, .n-menu { height: 22px; padding-left: 34px; }
.n-wheel { height: 84px; padding-bottom: 22px; }
.n-pan { height: 53px; background: #4c5661; }
.n-zoom { height: 60px; }
.n-orbit { height: 72px; }
.n-look { height: 58px; }
.n-walk { height: 88px; }
.n-select { height: 60px; }

/* TimeLiner panel */
.timeliner { border: solid #8a8a8a; border-width: 10px 6px 8px 6px; border-top-color: #969ba3; background: linear-gradient(#efefef, #f1f1f1 25%, #dfdfdf); color: #3c3c3c; font-size: 24px; }
.tl-title { display: flex; align-items: center; height: 41px; padding: 0 13px 0 11px; gap: 17px; background: linear-gradient(#c3dcf5, #b6d4f1); border-bottom: 3px solid #7d8a99; }
.tl-title h2 { flex: 1; }
.tabs { display: flex; align-items: flex-end; height: 80px; padding-left: 24px; border-bottom: 3px solid #ccc; }
.tab { height: 51px; padding: 0; border: solid #aaabb0; border-width: 3px 3px 0 0; background: linear-gradient(#f3f3f3, #dedede); }
.tab:nth-child(1) { width: 93px; }
.tab:nth-child(2) { width: 169px; }
.tab:nth-child(3) { width: 138px; }
.tab:nth-child(4) { width: 120px; }
.tab.active { height: 57px; margin-bottom: -3px; border-left-width: 3px; background: #fff; }
.tl-body { padding: 20px 24px 20px 22px; }
.toolbar { display: flex; align-items: flex-start; gap: 11px; }
.group { display: flex; height: 62px; border: 3px solid #ababab; border-top-color: #d2d2d2; border-radius: 8px; background: linear-gradient(#f8f8f8, #dcdcdc); overflow: hidden; }
.group button { display: flex; align-items: center; justify-content: center; gap: 5px; border-right: 2px solid #9a9a9a; }
.group button:last-child { border-right: 0; }
.group svg { width: 40px; height: 40px; }
.w1 { width: 62px; }
.w2 { width: 80px; }
.w-add { width: 166px; }
.w-att { width: 156px; }
.group .w1:last-child { width: 59px; }
.group .w2:last-child { width: 76px; }
.group .off { background: #f1f1f1; }
.group .on { border-width: 0; background: linear-gradient(#6da4e2, #a9cff5 30%, #d4eafd); }
.group .deep { border: 0; border-top: 4px solid #3d4f8c; border-right: 2px solid #7386ad; }
.views { margin-left: 68px; }
.views .w1:last-child { width: 54px; }
.zoom { display: flex; align-items: center; gap: 26px; height: 62px; margin-left: 22px; }
.zoom input { appearance: none; width: 268px; height: 41px; margin: 0 0 20px; background: linear-gradient(#dfe1e1, #dfe1e1) center / 100% 7px no-repeat; }
.zoom input::-webkit-slider-thumb { appearance: none; width: 27px; height: 41px; border: 3px solid #c8c8c8; background: #f2f2f2; }
.last { margin-left: auto; }

.sheet { display: grid; grid-template-columns: 1106px minmax(0, 1fr); gap: 5px; margin-top: 18px; }
.pane { border: 3px solid #c6c8ce; border-top: 4px solid #dcdcdc; background: #fff; min-width: 0; overflow: hidden; }
.tasks { width: 100%; table-layout: fixed; border-collapse: separate; border-spacing: 0; }
.c0 { width: 28px; }
.c1 { width: 93px; }
.c3 { width: 101px; }
.c4 { width: 180px; }
.c5 { width: 171px; }
.c6 { width: 145px; }
.tasks th { height: 81px; padding: 5px 0 0; font-weight: 400; background: #efefef; border-right: 2px solid #bdbdbd; border-bottom: 2px solid #d4d4d4; }
.tasks td { height: 39px; padding: 0 0 0 5px; border-right: 2px solid #f3f3f3; border-bottom: 2px solid #f3f3f3; line-height: 34px; white-space: nowrap; overflow: hidden; }
.tasks td:nth-child(n+5) { font-size: 25px; }
.tasks th:last-child, .tasks td:last-child { border-right: 0; }
.tasks td:first-child { padding-left: 9px; background: #efefef; border-color: #bdbdbd; }
.tasks td:nth-child(2) { padding: 0; }
.tasks td:nth-child(2) input { appearance: none; display: grid; place-items: center; width: 31px; height: 31px; margin: 0 auto; border: 3px solid #777; background: #fff; }
.tasks input::after { content: ""; width: 9px; height: 17px; margin-top: -5px; border: solid #555; border-width: 0 2px 2px 0; rotate: 42deg; }
.tasks td.name { padding-left: 6px; }
.tasks td.l1 { padding-left: 39px; }
.tasks td.l2 { padding-left: 45px; }
.tasks td.parent { font-weight: 700; color: #111; }
.expander { display: inline-block; width: 18px; height: 18px; margin: 0 13px 0 3px; border: 2px solid #b5b9c2; background: linear-gradient(#5577bb, #5577bb) center / 10px 2px no-repeat #f4f5f8; vertical-align: -1px; }
.status { display: grid; grid-template-rows: 13px 13px; gap: 3px; width: 36px; margin-left: 28px; }
.status::before, .status::after { content: ""; border: 3px solid #858585; background: #a3a3a3; }
.status::after { border: 2px solid #e6e6e6; background: #fafafa; }
.tasks .selected td { background: #0078d7; border-right-color: #4b9be0; border-bottom-color: #5aa9ea; color: #d6e9fb; }
.tasks .selected td:first-child { background: #efefef; border-color: #bdbdbd; }
.tasks .selected td.name { background: #fff; border-bottom-color: #f3f3f3; color: #3c3c3c; }

.gantt { color: #333; }
.years, .halves { display: grid; background: #efefef; }
.years { grid-template-columns: 1050fr repeat(12, 1827fr) 690fr; height: 39px; border-bottom: 3px solid #c4c4c4; font-size: 26px; line-height: 38px; }
.years span { padding-left: 10px; border-right: 2px solid #c8c8c8; min-width: 0; }
.halves, .gridlines { grid-template-columns: 260fr 1840fr repeat(24, 1827fr) 1380fr; }
.halves { height: 42px; border-bottom: 2px solid #d4d4d4; line-height: 44px; text-align: center; }
.halves span { border-right: 2px solid #c8c8c8; min-width: 0; }
.years span:last-child, .halves span:last-child { border-right: 0; }
.halves span:last-child { text-align: left; padding-left: 30px; }
.lanes { position: relative; }
.gridlines { position: absolute; inset: 0; display: grid; }
.gridlines i { border-right: 2px dashed rgb(120 120 120 / 30%); }
.gridlines i:last-child { border-right: 0; }
.lane { position: relative; height: 39px; border-bottom: 2px solid #f5f5f5; }
.lane.selected { background: #0078d7; border-bottom-color: #4b9be0; }
.bar, .summary { position: absolute; z-index: 1; }
.bar { top: 3px; height: 33px; border: 3px solid #6a6a6a; background: #d2d2d2; }
.summary { top: 3px; height: 32px; background: #000; clip-path: polygon(0 0, 100% 0, 100% 17px, calc(100% - 15px) 100%, calc(100% - 30px) 18px, 30px 18px, 15px 100%, 0 17px); }

.scroll { display: flex; height: 45px; border-top: 7px solid #b4b4b4; background: #efefef; }
.scroll button { display: grid; place-items: center; width: 38px; }
.track { flex: 1; min-width: 0; }
.thumb { height: 100%; background: #cdcdcd; }
```
